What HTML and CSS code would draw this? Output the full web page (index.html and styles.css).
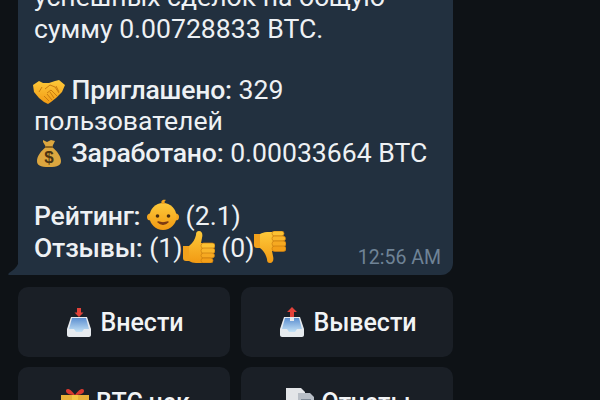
FILE: index.html
```html
<!DOCTYPE html>
<html lang="ru">
<head>
<meta charset="utf-8">
<title>Профиль</title>
<link rel="stylesheet" href="styles.css">
</head>
<body>
<svg class="defs" width="0" height="0" aria-hidden="true">
  <defs>
    <linearGradient id="gold" x1="0" y1="0" x2="0" y2="1"><stop offset="0" stop-color="#fdc93a"/><stop offset="1" stop-color="#f29a13"/></linearGradient>
    <linearGradient id="tray" x1="0" y1="0" x2="0" y2="1"><stop offset="0" stop-color="#5c8fd0"/><stop offset="1" stop-color="#c4e2f6"/></linearGradient>
    <symbol id="hands" viewBox="0 0 32 24">
      <path d="M0 5 6 1l4 2 6 0 6-2 4-1 6 5-3 7-6 6-5 4-3 2-4-2-5-4-5-6z" fill="url(#gold)"/>
      <path d="M9 7l-3 5M23 6l3 6M12 9l5-4 5 2 4 6M14 13l4-3 6 6M11 16l5 5M14 14l5 6M17 12l4 6" fill="none" stroke="#c97c10" stroke-width="1"/>
    </symbol>
    <symbol id="bag" viewBox="0 0 24 28">
      <path d="M6 1l4 2 4-2 4 1-3 6c5 4 9 9 9 14 0 4-3 6-12 6S0 26 0 22c0-5 4-10 9-14L6 3z" fill="#dca63f"/>
      <path d="M8 8h8" stroke="#8a6320" stroke-width="2"/>
      <text x="12" y="24" text-anchor="middle" class="dollar">$</text>
    </symbol>
    <symbol id="baby" viewBox="0 0 32 32">
      <circle cx="3.500" cy="18" r="3.500" fill="#f3a51f"/><circle cx="28.500" cy="18" r="3.500" fill="#f3a51f"/>
      <circle cx="16" cy="17.500" r="13.500" fill="url(#gold)"/>
      <path d="M15 5c-2-3 1-5 4-4-2 1-2 3 0 4z" fill="#f3a51f"/>
      <circle cx="10.500" cy="17" r="1.800" fill="#4a2d10"/><circle cx="21.500" cy="17" r="1.800" fill="#4a2d10"/>
      <path d="M11 23c3 3 7 3 10 0-3 1-7 1-10 0z" fill="#7d3a12" stroke="#7d3a12" stroke-width="1.400" stroke-linejoin="round"/>
    </symbol>
    <symbol id="up" viewBox="0 0 32 32">
      <path d="M0 15h7v15H3c-2 0-3-1-3-3z" fill="#f2a11c"/>
      <path d="M6 15c4-3 6-7 7-11 0-3 1-4 3-4 3 0 4 3 3 7l-1 5h4v20h-9c-3 0-5-1-7-2z" fill="url(#gold)"/>
      <rect x="18" y="12" width="14" height="5.500" rx="2.700" fill="#fcc233" stroke="#c97c10" stroke-width=".7"/>
      <rect x="18" y="17" width="14" height="5.500" rx="2.700" fill="#f9b52a" stroke="#c97c10" stroke-width=".7"/>
      <rect x="18" y="22" width="13.500" height="5" rx="2.500" fill="#f6a921" stroke="#c97c10" stroke-width=".7"/>
      <rect x="18" y="27" width="12" height="5" rx="2.500" fill="#f39f18" stroke="#c97c10" stroke-width=".7"/>
    </symbol>
    <symbol id="down" viewBox="0 0 32 32">
      <path d="M0 3h7v14H3c-2 0-3-1-3-3z" fill="#f2a11c"/>
      <path d="M6 3c2-1 4-2 7-2h9v19h-4l1 5c1 4 0 7-3 7-2 0-3-1-3-4-1-4-3-8-7-11z" fill="url(#gold)"/>
      <rect x="18" y="0" width="12" height="5" rx="2.500" fill="#fcc233" stroke="#c97c10" stroke-width=".7"/>
      <rect x="18" y="5" width="13.500" height="5" rx="2.500" fill="#f9b52a" stroke="#c97c10" stroke-width=".7"/>
      <rect x="18" y="10" width="14" height="5.500" rx="2.700" fill="#f6a921" stroke="#c97c10" stroke-width=".7"/>
      <rect x="18" y="15" width="14" height="5.500" rx="2.700" fill="#f39f18" stroke="#c97c10" stroke-width=".7"/>
    </symbol>
    <symbol id="inbox" viewBox="0 0 24 30">
      <path d="M12 10 7.500 5.500h2.500V1h4v4.500h2.500z" fill="#e2423a"/>
      <path d="M4 10h16l4 12v6c0 1-1 2-2 2H2c-1 0-2-1-2-2v-6z" fill="#e6eaee"/>
      <path d="M5 11h14l3 11h-5l-2 3H9l-2-3H2z" fill="url(#tray)"/>
    </symbol>
    <symbol id="outbox" viewBox="0 0 24 30">
      <path d="M12 0l5 5h-3v7h-4V5H7z" fill="#e2423a"/>
      <path d="M4 10h16l4 12v6c0 1-1 2-2 2H2c-1 0-2-1-2-2v-6z" fill="#e6eaee"/>
      <path d="M5 11h5v3h4v-3h5l3 11h-5l-2 3H9l-2-3H2z" fill="url(#tray)"/>
    </symbol>
    <symbol id="gift" viewBox="0 0 28 28">
      <path d="M14 7C9 0 5 0 5 3c0 3 5 4 9 4s9-1 9-4c0-3-4-3-9 4z" fill="#d8392f"/>
      <rect x="0" y="7" width="28" height="6" fill="#e8b13a"/>
      <rect x="2" y="13" width="24" height="15" fill="#cf2f2a"/>
      <rect x="11" y="7" width="6" height="21" fill="#f3c644"/>
    </symbol>
    <symbol id="docs" viewBox="0 0 28 28">
      <path d="M0 0h15l4 4v24H0z" fill="#e3e5e8"/>
      <path d="M12 5h12l4 4v19H12z" fill="#b8bec6"/>
      <path d="M15 12h10M15 16h10M15 20h10" stroke="#6c7a88" stroke-width="1.400"/>
    </symbol>
  </defs>
</svg>
<main class="chat">
  <article class="bubble">
    <svg class="tail" viewBox="0 0 11 14" aria-hidden="true"><path d="M11 0v14H1c-1 0-1-1 0-2C6 9 10 5 11 0z" fill="#22303f"/></svg>
    <p class="line">успешных сделок на общую</p>
    <p class="line">сумму 0.00728833 BTC.</p>
    <p class="line short">&nbsp;</p>
    <p class="line"><svg class="emoji hands"><use href="#hands"/></svg> <b>Приглашено:</b> 329</p>
    <p class="line">пользователей</p>
    <p class="line"><svg class="emoji bag"><use href="#bag"/></svg> <b>Заработано:</b> 0.00033664 BTC</p>
    <p class="line">&nbsp;</p>
    <p class="line"><b>Рейтинг:</b> <svg class="emoji"><use href="#baby"/></svg> (2.1)</p>
    <p class="line"><b>Отзывы:</b> (1)<svg class="emoji"><use href="#up"/></svg> (0)<svg class="emoji"><use href="#down"/></svg></p>
    <time class="stamp">12:56 AM</time>
  </article>
  <nav class="keyboard">
    <button class="key"><svg class="key-icon"><use href="#inbox"/></svg> Внести</button>
    <button class="key"><svg class="key-icon"><use href="#outbox"/></svg> Вывести</button>
    <button class="key"><svg class="key-icon big"><use href="#gift"/></svg> BTC чек</button>
    <button class="key"><svg class="key-icon big"><use href="#docs"/></svg> Отчеты</button>
  </nav>
</main>
</body>
</html>
```

FILE: styles.css
```css
* { box-sizing: border-box; }
html, body { margin: 0; height: 100%; }
body {
  width: 600px;
  height: 400px;
  overflow: hidden;
  background: #0e1216;
  font-family: Roboto, "Liberation Sans", sans-serif;
  color: #eef1f4;
}
.defs { position: absolute; }
.dollar { font: 700 17px "Liberation Sans", sans-serif; fill: #4a3312; }
.chat {
  width: 435px;
  margin: -19px 0 0 18px;
  display: flex;
  flex-direction: column;
  gap: 12px;
}
.bubble {
  position: relative;
  background: #22303f;
  border-radius: 12px 12px 12px 0;
  padding: 0 16px 10px;
  height: 294px;
}
.tail {
  position: absolute;
  left: -10px;
  bottom: 0;
  width: 11px;
  height: 14px;
}
.line {
  margin: 0;
  height: 31.6px;
  line-height: 31.6px;
  font-size: 26.6px;
  white-space: nowrap;
}
.line.short { height: 29.4px; }
.line b { font-weight: 500; letter-spacing: -0.2px; }
.emoji {
  width: 32px;
  height: 32px;
  margin-block: -8px;
  vertical-align: 2px;
}
.emoji.hands { height: 24px; vertical-align: 3px; margin-left: -1px; }
.emoji.bag { height: 28px; vertical-align: 3px; margin-left: -1px; }
.stamp {
  position: absolute;
  right: 12px;
  bottom: 6px;
  font-size: 19.5px;
  color: #6f8396;
}
.keyboard {
  display: grid;
  grid-template-columns: 212px 212px;
  grid-auto-rows: 70px;
  gap: 10px 11px;
}
.key {
  border: 0;
  border-radius: 10px;
  background: #1a1f26;
  color: #f2f4f6;
  font: 500 25px Roboto, "Liberation Sans", sans-serif;
  display: flex;
  align-items: center;
  justify-content: center;
  gap: 9px;
  padding: 0 0 0 3px;
}
.key-icon { width: 24px; height: 30px; flex: none; }
.key-icon.big { width: 28px; height: 28px; margin-right: -2px; }
```
